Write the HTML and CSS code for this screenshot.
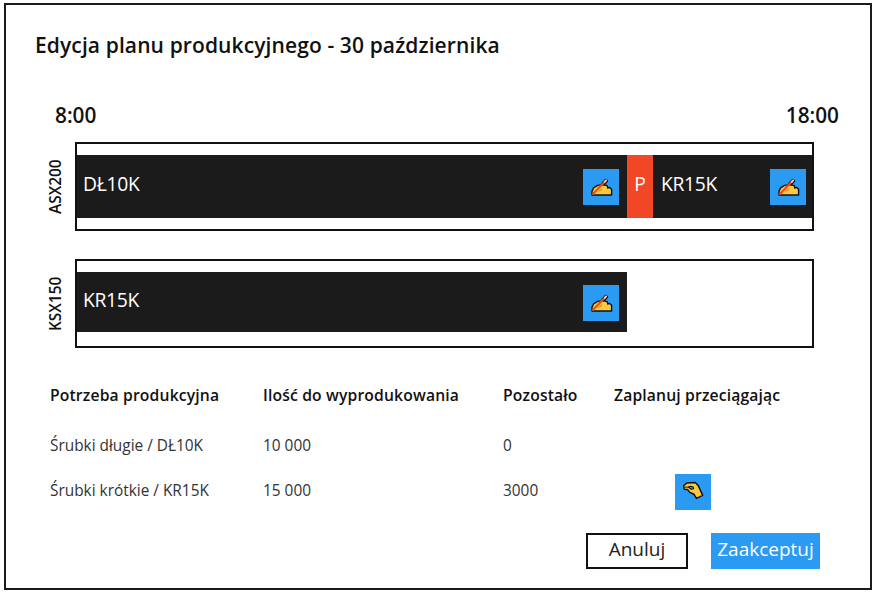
FILE: index.html
```html
<!DOCTYPE html>
<html lang="pl">
<head>
<meta charset="utf-8">
<title>Edycja planu produkcyjnego</title>
<link rel="stylesheet" href="styles.css">
</head>
<body>
<svg class="defs" width="0" height="0" aria-hidden="true">
  <symbol id="write" viewBox="0 0 36 36">
    <path d="M9 26V22.4L10.6 18.8L14.6 16.4L20 15.6L24.2 16.6L24.8 19L26.6 18.4L28.6 20.2V26Z" fill="#fcc93c" stroke="#111" stroke-width="1.4" stroke-linejoin="round"/>
    <path d="M14.6 23L19 18.6L18.5 21.8Z" fill="#e39a26"/>
    <path d="M19.4 14.6L22.9 10.9L24 12L20.8 15.4" fill="none" stroke="#111" stroke-width="2.4" stroke-linejoin="round" stroke-linecap="round"/>
    <path d="M9.4 25.6L22.6 12" stroke="#f04a22" stroke-width="2.1"/>
    <path d="M21.7 12.9L23.2 11.3" stroke="#f5cfc4" stroke-width="1.8" stroke-linecap="round"/>
  </symbol>
  <symbol id="pinch" viewBox="0 0 36 36">
    <path d="M8.6 11.8L11.8 9L20.2 8.4L23.2 11.5L27.7 21.4L21.5 24.4L19 20.3L14.8 18.4L12.6 15.6L9.2 15.2Z" fill="#fcc93c" stroke="#111" stroke-width="1.5" stroke-linejoin="round"/>
    <path d="M13.3 13.1L15.6 12.2L18.2 13.1L18.6 14.8L16.2 15.2Z" fill="#2b9af3" stroke="#111" stroke-width="1.1" stroke-linejoin="round"/>
    <path d="M9.4 13.2H13.3" stroke="#111" stroke-width=".9"/>
  </symbol>
</svg>
<main class="dialog">
  <h1 class="title">Edycja planu produkcyjnego - 30 października</h1>
  <div class="hours"><span>8:00</span><span>18:00</span></div>

  <section class="lane">
    <div class="machine">ASX200</div>
    <div class="track">
      <div class="job long"><span>DŁ10K</span><svg class="tile"><use href="#write"/></svg></div>
      <div class="pause"><span>P</span></div>
      <div class="job short"><span>KR15K</span><svg class="tile"><use href="#write"/></svg></div>
    </div>
  </section>
  <section class="lane second">
    <div class="machine">KSX150</div>
    <div class="track">
      <div class="job long"><span>KR15K</span><svg class="tile"><use href="#write"/></svg></div>
    </div>
  </section>

  <div class="needs">
    <b>Potrzeba produkcyjna</b><b>Ilość do wyprodukowania</b><b>Pozostało</b><b>Zaplanuj przeciągając</b>
    <span>Śrubki długie / DŁ10K</span><span>10 000</span><span>0</span><span></span>
    <span class="last">Śrubki krótkie / KR15K</span><span class="last">15 000</span><span class="last">3000</span><svg class="tile drag"><use href="#pinch"/></svg>
  </div>

  <div class="actions">
    <button class="btn cancel">Anuluj</button>
    <button class="btn accept">Zaakceptuj</button>
  </div>
</main>
</body>
</html>
```

FILE: styles.css
```css
* { box-sizing: border-box; }
body {
  margin: 0;
  padding: 3px 2px 2px 4px;
  background: #fff;
  color: #111;
  font-family: "Open Sans", "Noto Sans", sans-serif;
}
.defs { display: block; width: 0; height: 0; }
.dialog {
  height: 587px;
  border: 2px solid #1b1b1b;
  overflow: hidden;
}
.title {
  margin: 26px 0 0 29px;
  font-size: 21px;
  font-weight: 600;
  line-height: 28px;
  letter-spacing: .11px;
  white-space: nowrap;
}
.hours {
  display: flex;
  justify-content: space-between;
  margin: 42px 31px 0 49px;
  font-size: 20.8px;
  font-weight: 600;
  line-height: 28px;
}
.lane {
  display: flex;
  height: 89px;
  margin: 13px 0 0 40px;
}
.machine {
  width: 29px;
  height: 89px;
  padding-left: 10px;
  writing-mode: vertical-rl;
  transform: rotate(180deg);
  line-height: 19px;
  font-size: 15.4px;
  font-weight: 600;
  text-align: center;
}
.track {
  display: flex;
  width: 739px;
  border: 2px solid #111;
  padding: 11px 0;
}
.job {
  display: flex;
  justify-content: space-between;
  height: 63px;
  padding: 14px 6px 0 6px;
  background: #1b1b1b;
  color: #fff;
  font-size: 19.3px;
  letter-spacing: -.3px;
  line-height: 30px;
}
.long { width: 550px; padding-right: 8px; }
.short { flex: 1; padding-left: 8px; }
.pause {
  width: 26px;
  height: 63px;
  padding-top: 14px;
  background: #f24726;
  color: #fff;
  font-size: 19.3px;
  line-height: 30px;
  text-align: center;
}
.second { margin-top: 28px; }
.second .job { height: 60px; padding-top: 13px; }
.tile {
  display: block;
  width: 36px;
  height: 36px;
  background: #2b9af3;
}
.needs {
  display: grid;
  grid-template-columns: 213px 240px 111px 200px;
  grid-template-rows: 50px 41px 36px;
  margin: 35px 0 0 44px;
  font-size: 15.4px;
  line-height: 24px;
  white-space: nowrap;
}
.needs b { font-size: 15.7px; font-weight: 600; letter-spacing: .15px; }
.needs span { padding-top: 1px; color: #333; }
.needs .last { padding-top: 5px; }
.drag { margin-left: 61px; }
.actions {
  display: flex;
  gap: 23px;
  margin: 23px 0 0 580px;
}
.btn {
  height: 36px;
  padding: 0 0 3px;
  font-family: inherit;
  font-size: 19px;
  line-height: 29px;
}
.cancel {
  width: 102px;
  border: 2px solid #111;
  background: #fff;
  color: #222;
}
.accept {
  width: 109px;
  border: 0;
  background: #2b9af3;
  color: #fff;
}
```
